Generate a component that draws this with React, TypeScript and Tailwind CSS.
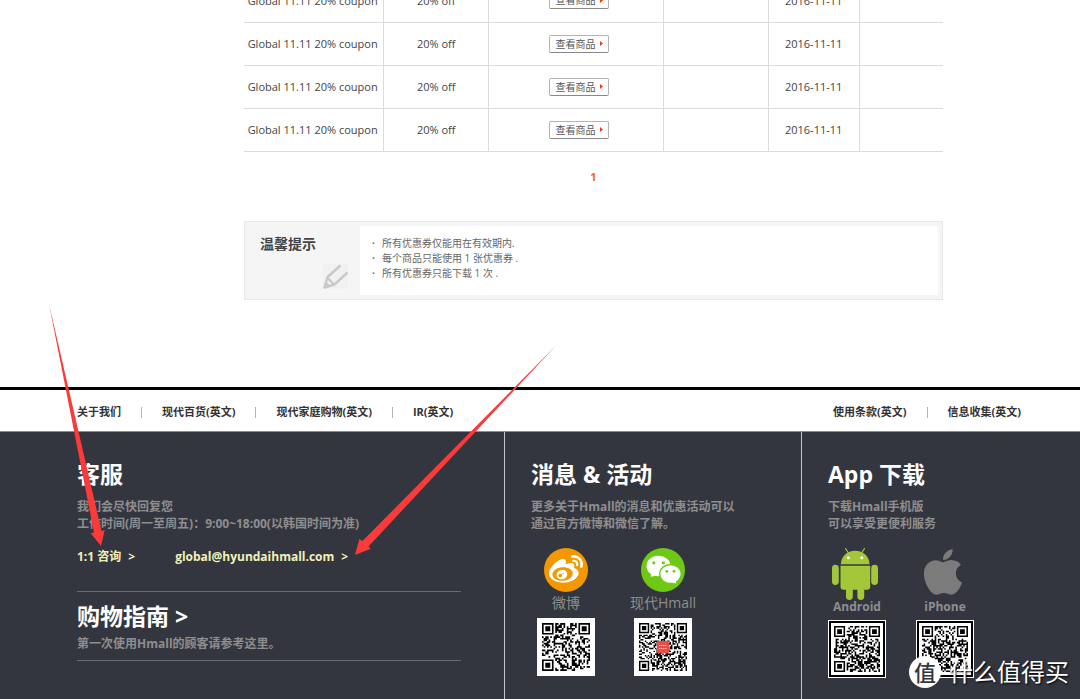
import React from 'react';
import { FaApple, FaWeibo } from 'react-icons/fa';

interface Coupon {
    id: number;
    name: string;
    discount: string;
    expires: string;
}

const coupons: Coupon[] = [
    { id: 1, name: 'Global 11.11 20% coupon', discount: '20% off', expires: '2016-11-11' },
    { id: 2, name: 'Global 11.11 20% coupon', discount: '20% off', expires: '2016-11-11' },
    { id: 3, name: 'Global 11.11 20% coupon', discount: '20% off', expires: '2016-11-11' },
    { id: 4, name: 'Global 11.11 20% coupon', discount: '20% off', expires: '2016-11-11' }
];

const notices = [
    '所有优惠券仅能用在有效期内.',
    '每个商品只能使用 1 张优惠券 .',
    '所有优惠券只能下载 1 次 .'
];

const aboutLinks = ['关于我们', '现代百货(英文)', '现代家庭购物(英文)', 'IR(英文)'];
const policyLinks = ['使用条款(英文)', '信息收集(英文)'];

// three finder squares plus a seeded module pattern
const buildModules = (size: number, seed: number) => {
    let state = seed;
    let path = '';
    const finder = (x: number, y: number) => {
        const edge = x === 0 || x === 6 || y === 0 || y === 6;
        const core = x >= 2 && x <= 4 && y >= 2 && y <= 4;
        return edge || core;
    };
    for (let y = 0; y < size; y++) {
        for (let x = 0; x < size; x++) {
            state = (state * 1103515245 + 12345) % 2147483648;
            let dark = state / 2147483648 > 0.48;
            const left = x < 8;
            const right = x >= size - 8;
            const top = y < 8;
            const bottom = y >= size - 8;
            if ((left && top) || (right && top) || (left && bottom)) {
                const fx = left ? x : x - (size - 7);
                const fy = top ? y : y - (size - 7);
                dark = fx >= 0 && fx < 7 && fy >= 0 && fy < 7 && finder(fx, fy);
            }
            if (dark) path += `M${x} ${y}h1v1h-1z`;
        }
    }
    return path;
};

const QrCode = ({ size, seed, label }: { size: number; seed: number; label: string }) => (
    <svg viewBox={`0 0 ${size} ${size}`} className="block h-full w-full" role="img" aria-label={label}>
        <path d={buildModules(size, seed)} fill="#000" />
    </svg>
);

const PencilIcon = () => (
    <svg viewBox="0 0 25 25" className="h-[25px] w-[25px] self-end bg-[#f1f1f1]" fill="none" stroke="#c9c9c9" strokeWidth="2.4" aria-hidden="true">
        <path d="M17.5 1.5 4.5 13 1.5 23.5 11.5 20.5 24.5 8.5" strokeLinejoin="round" />
        <path d="M4.5 14 11 20.5" />
        <path d="M1.5 23.5 3 18 7 22z" fill="#c9c9c9" strokeWidth="1" />
    </svg>
);

const WechatIcon = () => (
    <svg viewBox="0 0 44 44" className="h-11 w-11" aria-hidden="true">
        <circle cx="22" cy="22" r="22" fill="#6fc914" />
        <path d="M9.5 28.8 10.8 24.5 16 27.5z" fill="#fff" />
        <ellipse cx="17.5" cy="18" rx="12" ry="10.3" fill="#fff" />
        <circle cx="12.8" cy="14.8" r="1.6" fill="#6fc914" />
        <circle cx="22.4" cy="14.8" r="1.6" fill="#6fc914" />
        <ellipse cx="29.5" cy="26" rx="10.8" ry="9.5" fill="#fff" stroke="#6fc914" strokeWidth="1.3" />
        <path d="M34.8 35.5 29.5 34 35 31.5z" fill="#fff" />
        <circle cx="25.8" cy="23.3" r="1.4" fill="#6fc914" />
        <circle cx="33" cy="23.3" r="1.4" fill="#6fc914" />
    </svg>
);

const AndroidIcon = () => (
    <svg viewBox="0 0 46 52" className="mr-1 h-[52px] w-[46px]" fill="#a4c639" aria-hidden="true">
        <path d="M13.5.5 16.5 5M32.5.5 29.5 5" stroke="#a4c639" strokeWidth="1.2" strokeLinecap="round" />
        <path d="M8.8 16.3C9.2 8.5 15 2.8 23.2 2.8S37.2 8.5 37.6 16.3z" />
        <circle cx="16.4" cy="9.8" r="1.5" fill="#fff" />
        <circle cx="29.8" cy="9.8" r="1.5" fill="#fff" />
        <path d="M8.5 17.7H38.2V38.5A3.2 3.2 0 0 1 35 41.7H11.7A3.2 3.2 0 0 1 8.5 38.5z" />
        <rect x="0" y="16.8" width="6.8" height="20.2" rx="3.4" />
        <rect x="39.2" y="16.8" width="6.8" height="20.2" rx="3.4" />
        <rect x="14" y="36" width="6.8" height="16" rx="3.4" />
        <rect x="25.4" y="36" width="6.8" height="16" rx="3.4" />
    </svg>
);

const CouponTable = () => (
    <table className="-mt-[21px] w-full table-fixed border-collapse text-center text-[11px] text-[#444]">
        <colgroup>
            <col className="w-[20%]" />
            <col className="w-[15%]" />
            <col className="w-[25%]" />
            <col className="w-[15%]" />
            <col className="w-[13%]" />
            <col className="w-[12%]" />
        </colgroup>
        <tbody>
            {coupons.map((coupon) => (
                <tr key={coupon.id} className="h-[43px] border-b border-[#dcdcdc]">
                    <td className="border-r border-[#dcdcdc] pt-[2px] pr-[2px] whitespace-nowrap">{coupon.name}</td>
                    <td className="border-r border-[#dcdcdc] pt-[2px]">{coupon.discount}</td>
                    <td className="border-r border-[#dcdcdc] pl-[6px]">
                        <button className="mx-auto flex h-[18px] w-[60px] items-center justify-center gap-1 rounded-xs border border-[#b4b4b4] border-b-[#888] bg-white text-[10px] leading-none text-[#555]">
                            查看商品
                            <svg viewBox="0 0 3 5" className="h-[5px] w-[3px]" aria-hidden="true">
                                <path d="M0 0 3 2.5 0 5z" fill="#f03a1c" />
                            </svg>
                        </button>
                    </td>
                    <td className="border-r border-[#dcdcdc]" />
                    <td className="border-r border-[#dcdcdc] pt-[2px]">{coupon.expires}</td>
                    <td />
                </tr>
            ))}
        </tbody>
    </table>
);

const NoticeBox = () => (
    <section className="flex border border-[#e8e8e8] bg-[#f5f5f5]">
        <div className="flex w-[115px] flex-col gap-[10px] pt-3 pr-3 pb-[10px] pl-[15px]">
            <h2 className="text-[14px] leading-5 font-bold text-[#444]">温馨提示</h2>
            <PencilIcon />
        </div>
        <ul className="my-1 mr-1 flex-1 bg-white pt-[10px] pl-3 text-[10px] leading-[15px] text-[#666]">
            {notices.map((notice) => (
                <li key={notice} className="flex">
                    <span className="w-[10px] font-bold">·</span>
                    {notice}
                </li>
            ))}
        </ul>
    </section>
);

const LinkList = ({ links }: { links: string[] }) => (
    <ul className="flex items-center">
        {links.map((link, index) => (
            <li key={link} className="flex items-center whitespace-nowrap">
                {index > 0 && <span className="mx-5 h-[11px] w-px bg-[#b4b4bc]" />}
                <a href="#">{link}</a>
            </li>
        ))}
    </ul>
);

const ServiceColumn = () => (
    <div className="pt-7 pr-[43px] pl-[77px]">
        <h2 className="text-[23px] leading-7 font-bold text-white">客服</h2>
        <p className="mt-[10px] whitespace-nowrap">
            我们会尽快回复您
            <br />
            工作时间(周一至周五)：9:00~18:00(以韩国时间为准)
        </p>
        <div className="mt-4 flex gap-10 leading-[17px] whitespace-nowrap text-[#f1f1b8]">
            <a href="#" className="flex gap-[7px]">
                1:1 咨询 <span>&gt;</span>
            </a>
            <a href="mailto:global@hyundaihmall.com" className="flex gap-[7px]">
                global@hyundaihmall.com <span>&gt;</span>
            </a>
        </div>
        <hr className="mt-[26px] border-[#686a72]" />
        <h2 className="mt-[10px] text-[23px] leading-7 font-bold text-white">
            <a href="#">购物指南 &gt;</a>
        </h2>
        <p className="mt-[5px]">第一次使用Hmall的顾客请参考这里。</p>
        <hr className="mt-2 border-[#686a72]" />
    </div>
);

const NewsColumn = () => (
    <div className="border-l border-[#c4c5c8] pt-7 pl-[26px]">
        <h2 className="text-[23px] leading-7 font-bold text-white">消息 &amp; 活动</h2>
        <p className="mt-[10px] whitespace-nowrap">
            更多关于Hmall的消息和优惠活动可以
            <br />
            通过官方微博和微信了解。
        </p>
        <div className="mt-4 flex gap-[39px] pl-[6px] text-[14px] leading-[18px] font-normal whitespace-nowrap">
            <div className="flex w-[58px] flex-col items-center">
                <span className="flex h-11 w-11 items-center justify-center rounded-full bg-[#f39800]">
                    <FaWeibo className="h-[34px] w-[34px] text-white" />
                </span>
                <span className="mt-[2px]">微博</span>
                <div className="mt-[6px] h-[58px] w-[58px] bg-white p-[5px]">
                    <QrCode size={29} seed={1911} label="微博二维码" />
                </div>
            </div>
            <div className="flex w-[58px] flex-col items-center">
                <WechatIcon />
                <span className="mt-[2px]">现代Hmall</span>
                <div className="mt-[6px] grid h-[58px] w-[58px] place-items-center bg-white p-[5px]">
                    <div className="col-start-1 row-start-1 h-full w-full">
                        <QrCode size={33} seed={4207} label="微信二维码" />
                    </div>
                    <svg viewBox="0 0 12 12" className="col-start-1 row-start-1 h-3 w-3" aria-hidden="true">
                        <rect width="12" height="12" rx="1" fill="#ee4b44" />
                        <path d="M2 4.5h8M2 7.5h8" stroke="#fff" strokeOpacity=".7" strokeDasharray="1.5 .5" />
                    </svg>
                </div>
            </div>
        </div>
    </div>
);

const AppColumn = () => (
    <div className="border-l border-[#c4c5c8] pt-7 pl-[26px]">
        <h2 className="text-[23px] leading-7 font-bold text-white">App 下载</h2>
        <p className="mt-[10px] whitespace-nowrap">
            下载Hmall手机版
            <br />
            可以享受更便利服务
        </p>
        <div className="mt-4 flex gap-[30px] leading-[14px]">
            <div className="flex w-[58px] flex-col items-center">
                <AndroidIcon />
                <span>Android</span>
                <div className="mt-[6px] h-[58px] w-[58px] border border-white bg-black p-[2px]">
                    <div className="h-full w-full bg-white p-[3px]">
                        <QrCode size={29} seed={733} label="Android二维码" />
                    </div>
                </div>
            </div>
            <div className="flex w-[58px] flex-col items-center">
                <FaApple className="-mt-[2px] mr-1 mb-[2px] h-[52px] w-[52px] text-[#7b7b7b]" />
                <span>iPhone</span>
                <div className="mt-[6px] h-[58px] w-[58px] border border-white bg-black p-[2px]">
                    <div className="h-full w-full bg-white p-[3px]">
                        <QrCode size={29} seed={5521} label="iPhone二维码" />
                    </div>
                </div>
            </div>
        </div>
    </div>
);

// hand-drawn style arrows pointing at the two contact links
const Arrows = () => (
    <svg viewBox="0 0 520 260" className="pointer-events-none absolute top-[300px] left-[40px] h-[260px] w-[520px]" fill="#fb3a3a" aria-hidden="true">
        <path d="M9 4 61.5 231 64.7 230.3 61 246 50.7 233.3 54 232.5z" />
        <path d="M516.5 45 328.5 246.5 330.7 248.7 315 255 319.3 239 322.5 241z" />
    </svg>
);

const Watermark = () => (
    <div className="pointer-events-none absolute right-[11px] bottom-[11px] flex items-center gap-2 text-[24px] leading-8 text-white">
        <span className="flex h-8 w-8 items-center justify-center rounded-full bg-white text-[22px] font-medium text-[#34363f]">值</span>
        <span className="[text-shadow:1px_1px_2px_#000]">什么值得买</span>
    </div>
);

const App = () => {
    return (
        <div className="relative flex min-h-screen flex-col overflow-hidden bg-white font-['Open_Sans','Noto_Sans_CJK_SC',sans-serif]">
            <main className="mr-[137px] ml-[244px]">
                <CouponTable />
                <nav className="pt-[17px] pb-9 text-center text-[11px] leading-4 font-bold text-[#f26322]">
                    <a href="#">1</a>
                </nav>
                <NoticeBox />
            </main>

            <footer className="mt-[87px] flex flex-1 flex-col border-t-3 border-black">
                <nav className="flex h-[41px] items-center justify-between pt-1 pr-[59px] pl-[77px] text-[11px] font-bold text-[#333]">
                    <LinkList links={aboutLinks} />
                    <LinkList links={policyLinks} />
                </nav>
                <div className="grid flex-1 grid-cols-[504fr_297fr_279fr] border-t border-[#8c8d92] bg-[#34363f] text-[12px] leading-[17px] font-bold text-[#8e8e8e]">
                    <ServiceColumn />
                    <NewsColumn />
                    <AppColumn />
                </div>
            </footer>

            <Arrows />
            <Watermark />
        </div>
    );
};

export default App;
